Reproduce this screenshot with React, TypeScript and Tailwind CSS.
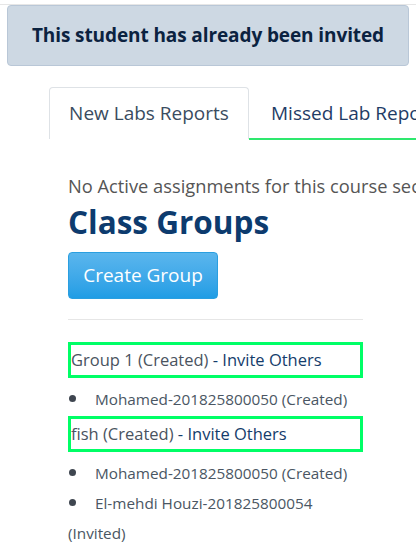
import React from 'react';

const font = { fontFamily: '"Open Sans", "Noto Sans", sans-serif' };

function Bullet() {
  return <span className="inline-block w-[7px] h-[7px] rounded-full bg-[#3f4650] ml-[1px] mr-[19px] align-middle relative -top-[2px]" />;
}

export default function App() {
  const groups = [
    { name: 'Group 1', members: ['Mohamed-201825800050 (Created)'] },
    { name: 'fish', members: ['Mohamed-201825800050 (Created)', 'El-mehdi Houzi-201825800054 (Invited)'] },
  ];

  return (
    <div className="w-[416px] h-[550px] overflow-hidden bg-white" style={font}>
      <div className="border-t border-[#e6e6e6] mt-[4px]" />
      {/* Alert */}
      <div className="mx-[7px] h-[61px] flex items-center justify-center rounded-[4px] bg-[#cdd8e3] border border-[#b9c7d7] text-[#0b2240] font-bold text-[19px] tracking-[-0.1px]">
        This student has already been invited
      </div>

      {/* Tabs */}
      <div className="mt-[21px] ml-[49px] flex items-end whitespace-nowrap">
        <div className="h-[52px] w-[200px] shrink-0 flex items-center justify-center border border-b-0 border-[#dee2e6] rounded-t-[4px] text-[19px] text-[#3a4c60]">
          New Labs Reports
        </div>
        <div className="flex-1 h-[52px] flex items-center pl-[22px] border-b-2 border-[#2ee86e] text-[19px] text-[#1f3c66] -mb-[1px] overflow-hidden">
          Missed Lab Reports
        </div>
      </div>

      {/* Content */}
      <div className="ml-[68px] w-[295px] whitespace-nowrap">
        <div className="mt-[35px] text-[18.3px] text-[#555555] leading-[24px]">
          No Active assignments for this course section
        </div>
        <h2 className="text-[31.5px] font-bold text-[#0d3b6e] leading-[38px] mt-[5px]">Class Groups</h2>
        <button className="mt-[11px] w-[150px] h-[47px] rounded-[4px] border border-[#2a9fe0] bg-gradient-to-b from-[#5ab6ed] to-[#1f9de5] text-white text-[19px]">
          Create Group
        </button>
        <div className="mt-[20px] border-t border-[#e6e6e6]" />

        <div className="mt-[22px] whitespace-normal">
          {groups.map((g, i) => (
            <div key={i}>
              <div className={`h-[36px] border-[3px] border-[#00ff66] flex items-center text-[16.5px] ${i > 0 ? 'mt-[2px]' : ''}`}>
                <span className="text-[#4a5360]">{g.name} (Created)</span>
                <span className="text-[#143c6b]">&nbsp;- Invite Others</span>
              </div>
              <ul className="mt-[6px]">
                {g.members.map((m, j) => (
                  <li key={j} className="text-[15.3px] leading-[30px] text-[#4a5663]">
                    <Bullet />
                    {m}
                  </li>
                ))}
              </ul>
            </div>
          ))}
        </div>
      </div>
    </div>
  );
}
